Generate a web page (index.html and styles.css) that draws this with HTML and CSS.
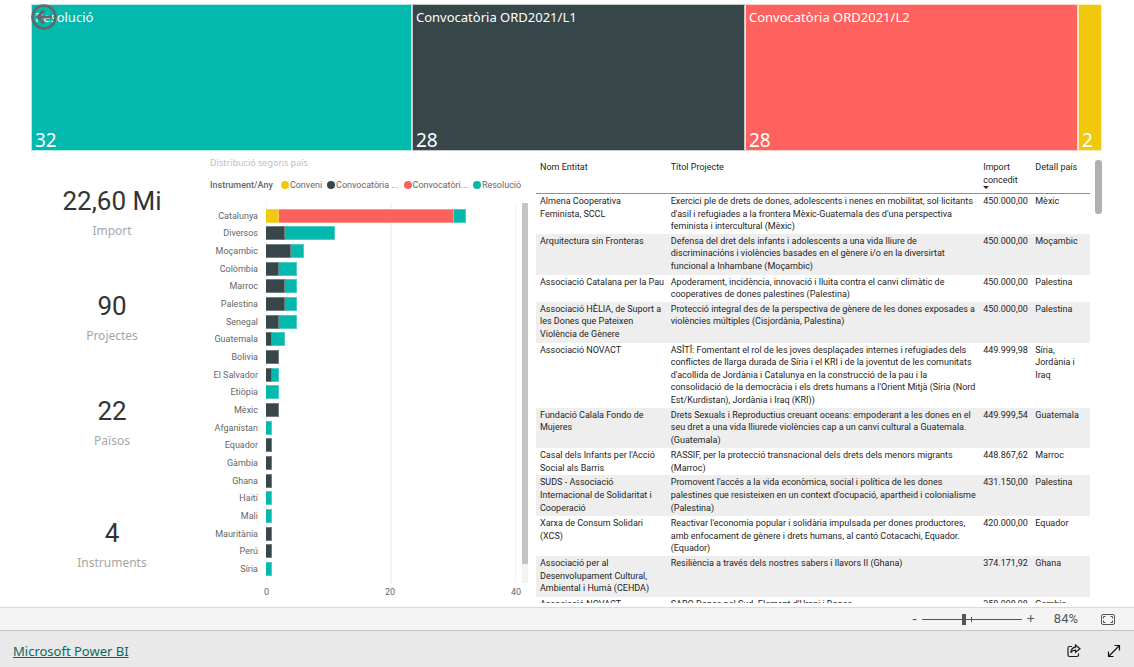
FILE: index.html
```html
<!DOCTYPE html>
<html lang="ca">
<head>
<meta charset="utf-8">
<meta name="viewport" content="width=device-width, initial-scale=1">
<title>Microsoft Power BI</title>
<link rel="stylesheet" href="styles.css">
</head>
<body>
<main class="report">
  <section class="treemap">
    <div class="tile resolucio"><span class="tile-name">Resolució</span><span class="tile-value">32</span></div>
    <div class="tile l1"><span class="tile-name">Convocatòria ORD2021/L1</span><span class="tile-value">28</span></div>
    <div class="tile l2"><span class="tile-name">Convocatòria ORD2021/L2</span><span class="tile-value">28</span></div>
    <div class="tile conveni"><span class="tile-value">2</span></div>
    <button class="back" type="button" aria-label="Enrere">
      <svg viewBox="0 0 26 26" width="26" height="26" fill="none" stroke="#666" stroke-width="2.600"><circle cx="13" cy="13" r="11.500"/><path d="M21 13H6.500M13 6.500 6.500 13l6.500 6.500" stroke-width="3"/></svg>
    </button>
  </section>

  <div class="panels">
    <section class="cards">
      <div class="card"><span class="card-value">22,60 Mi</span><span class="card-label">Import</span></div>
      <div class="card"><span class="card-value">90</span><span class="card-label">Projectes</span></div>
      <div class="card"><span class="card-value">22</span><span class="card-label">Països</span></div>
      <div class="card last"><span class="card-value">4</span><span class="card-label">Instruments</span></div>
    </section>

    <section class="chart">
      <h2 class="chart-title">Distribució segons país</h2>
      <div class="legend">
        <span class="legend-title">Instrument/Any</span>
        <span class="legend-item"><i class="dot conveni"></i>Conveni</span>
        <span class="legend-item"><i class="dot l1"></i>Convocatòria ...</span>
        <span class="legend-item"><i class="dot l2"></i>Convocatòri...</span>
        <span class="legend-item"><i class="dot resolucio"></i>Resolució</span>
      </div>
      <div class="plot">
        <div class="names">
          <span>Catalunya</span><span>Diversos</span><span>Moçambic</span><span>Colòmbia</span><span>Marroc</span><span>Palestina</span><span>Senegal</span><span>Guatemala</span><span>Bolivia</span><span>El Salvador</span><span>Etiòpia</span><span>Mèxic</span><span>Afganistan</span><span>Equador</span><span>Gàmbia</span><span>Ghana</span><span>Haití</span><span>Mali</span><span>Mauritània</span><span>Perú</span><span>Síria</span>
        </div>
        <div class="bars">
          <div class="bar"><i class="conveni" style="width:5%"></i><i class="l2" style="width:70%"></i><i class="resolucio" style="width:5%"></i></div>
          <div class="bar"><i class="l1" style="width:7.5%"></i><i class="resolucio" style="width:20%"></i></div>
          <div class="bar"><i class="l1" style="width:10%"></i><i class="resolucio" style="width:5%"></i></div>
          <div class="bar"><i class="l1" style="width:5%"></i><i class="resolucio" style="width:7.5%"></i></div>
          <div class="bar"><i class="l1" style="width:7.5%"></i><i class="resolucio" style="width:5%"></i></div>
          <div class="bar"><i class="l1" style="width:7.5%"></i><i class="resolucio" style="width:5%"></i></div>
          <div class="bar"><i class="l1" style="width:5%"></i><i class="resolucio" style="width:7.5%"></i></div>
          <div class="bar"><i class="l1" style="width:2.5%"></i><i class="resolucio" style="width:5%"></i></div>
          <div class="bar"><i class="l1" style="width:5%"></i></div>
          <div class="bar"><i class="l1" style="width:2.5%"></i><i class="resolucio" style="width:2.5%"></i></div>
          <div class="bar"><i class="resolucio" style="width:5%"></i></div>
          <div class="bar"><i class="l1" style="width:5%"></i></div>
          <div class="bar"><i class="resolucio" style="width:2.5%"></i></div>
          <div class="bar"><i class="l1" style="width:2.5%"></i></div>
          <div class="bar"><i class="l1" style="width:2.5%"></i></div>
          <div class="bar"><i class="l1" style="width:2.5%"></i></div>
          <div class="bar"><i class="resolucio" style="width:2.5%"></i></div>
          <div class="bar"><i class="resolucio" style="width:2.5%"></i></div>
          <div class="bar"><i class="l1" style="width:2.5%"></i></div>
          <div class="bar"><i class="l1" style="width:2.5%"></i></div>
          <div class="bar"><i class="resolucio" style="width:2.5%"></i></div>
        </div>
        <div class="chart-scroll"><div class="chart-thumb"></div></div>
        <div class="axis"><span>0</span><span>20</span><span>40</span></div>
      </div>
    </section>

    <section class="list">
      <div class="table-clip">
      <table class="projects">
        <colgroup><col class="c-entity"><col class="c-title"><col class="c-amount"><col class="c-country"></colgroup>
        <thead>
          <tr><th scope="col">Nom Entitat</th><th scope="col">Títol Projecte</th><th scope="col" aria-sort="descending">Import<br>concedit<span class="sort"></span></th><th scope="col">Detall país</th></tr>
        </thead>
        <tbody>
          <tr><td>Almena Cooperativa<br>Feminista, SCCL</td><td>Exercici ple de drets de dones, adolescents i nenes en mobilitat, sol·licitants<br>d'asil i refugiades a la frontera Mèxic-Guatemala des d'una perspectiva<br>feminista i intercultural (Mèxic)</td><td>450.000,00</td><td>Mèxic</td></tr>
          <tr><td>Arquitectura sin Fronteras</td><td>Defensa del dret dels infants i adolescents a una vida lliure de<br>discriminacións i violències basades en el gènere i/o en la diversirtat<br>funcional a Inhambane (Moçambic)</td><td>450.000,00</td><td>Moçambic</td></tr>
          <tr><td>Associació Catalana per la Pau</td><td>Apoderament, incidència, innovació i lluita contra el canvi climàtic de<br>cooperatives de dones palestines (Palestina)</td><td>450.000,00</td><td>Palestina</td></tr>
          <tr><td>Associació HÈLIA, de Suport a<br>les Dones que Pateixen<br>Violència de Gènere</td><td>Protecció integral des de la perspectiva de gènere de les dones exposades a<br>violències múltiples (Cisjordània, Palestina)</td><td>450.000,00</td><td>Palestina</td></tr>
          <tr><td>Associació NOVACT</td><td>ASÎTÎ: Fomentant el rol de les joves desplaçades internes i refugiades dels<br>conflictes de llarga durada de Síria i el KRI i de la joventut de les comunitats<br>d'acollida de Jordània i Catalunya en la construcció de la pau i la<br>consolidació de la democràcia i els drets humans a l'Orient Mitjà (Síria (Nord<br>Est/Kurdistan), Jordània i Iraq (KRI))</td><td>449.999,98</td><td>Síria,<br>Jordània i<br>Iraq</td></tr>
          <tr><td>Fundació Calala Fondo de<br>Mujeres</td><td>Drets Sexuals i Reproductius creuant oceans: empoderant a les dones en el<br>seu dret a una vida lliurede violències cap a un canvi cultural a Guatemala.<br>(Guatemala)</td><td>449.999,54</td><td>Guatemala</td></tr>
          <tr><td>Casal dels Infants per l'Acció<br>Social als Barris</td><td>RASSIF, per la protecció transnacional dels drets dels menors migrants<br>(Marroc)</td><td>448.867,62</td><td>Marroc</td></tr>
          <tr><td>SUDS - Associació<br>Internacional de Solidaritat i<br>Cooperació</td><td>Promovent l'accés a la vida econòmica, social i política de les dones<br>palestines que resisteixen en un context d'ocupació, apartheid i colonialisme<br>(Palestina)</td><td>431.150,00</td><td>Palestina</td></tr>
          <tr><td>Xarxa de Consum Solidari<br>(XCS)</td><td>Reactivar l'economia popular i solidària impulsada per dones productores,<br>amb enfocament de gènere i drets humans, al cantó Cotacachi, Equador.<br>(Equador)</td><td>420.000,00</td><td>Equador</td></tr>
          <tr><td>Associació per al<br>Desenvolupament Cultural,<br>Ambiental i Humà (CEHDA)</td><td>Resiliència a través dels nostres sabers i llavors II (Ghana)</td><td>374.171,92</td><td>Ghana</td></tr>
          <tr><td>Associació NOVACT</td><td>SABO Dones pel Sud. Element d'Urani i Dones</td><td>358.998,98</td><td>Gambia</td></tr>
        </tbody>
      </table>
      </div>
      <div class="list-thumb"></div>
    </section>
  </div>
</main>

<div class="zoombar">
  <button class="step" type="button" aria-label="Redueix">-</button>
  <input class="zoom-range" type="range" min="0" max="100" value="42" aria-label="Zoom">
  <button class="step plus" type="button" aria-label="Amplia">+</button>
  <span class="zoom-value">84%</span>
  <button class="icon-button" type="button" aria-label="Ajusta a la pàgina">
    <svg viewBox="0 0 14 11" width="14" height="11" fill="none" stroke="#555"><rect x=".5" y=".5" width="13" height="10" rx="1.500"/><path d="M2.500 4.500v-2h2M9.500 2.500h2v2M11.500 6.500v2h-2M4.500 8.500h-2v-2"/></svg>
  </button>
</div>

<footer class="footer">
  <a class="brand" href="#">Microsoft Power BI</a>
  <button class="icon-button" type="button" aria-label="Comparteix">
    <svg viewBox="0 0 14 14" width="14" height="14" fill="none" stroke="#1b1b1b" stroke-width="1.200"><path d="M5 2.500H2.500Q1 2.500 1 4v7q0 1.500 1.500 1.500h7.500q1.500 0 1.500-1.500V9.500"/><path d="M8.500 1 13 4.700 8.500 8.300V6.200Q5.500 6 3.800 8.800 4.200 3.600 8.500 3.200Z"/></svg>
  </button>
  <button class="icon-button" type="button" aria-label="Pantalla completa">
    <svg viewBox="0 0 14 14" width="14" height="14" fill="none" stroke="#111" stroke-width="1.200"><path d="M1.500 12.500l11-11M7.500 1.500h5v5M1.500 7.500v5h5"/></svg>
  </button>
</footer>
</body>
</html>
```

FILE: styles.css
```css
* { box-sizing: border-box; }

body {
  margin: 0;
  height: 100vh;
  display: flex;
  flex-direction: column;
  background: #fff;
  color: #252423;
  font-family: "Noto Sans", "Open Sans", sans-serif;
  font-size: 9px;
}

button {
  padding: 0;
  border: 0;
  background: none;
  color: inherit;
  font: inherit;
}

svg { display: block; }

.resolucio { background: #03b8ac; }
.l1 { background: #374649; }
.l2 { background: #fe625e; }
.conveni { background: #f2c80f; }

.report {
  flex: 1;
  min-height: 0;
  display: flex;
  flex-direction: column;
  padding: 4px 32px 4px 31px;
}

/* Treemap */
.treemap {
  position: relative;
  display: grid;
  grid-template-columns: 381fr 333fr 333fr 24fr;
  flex: 0 0 147px;
}
.tile {
  min-width: 0;
  display: flex;
  flex-direction: column;
  padding: 4px 4px 0 3px;
  border: 1px solid rgba(255, 255, 255, .7);
  color: #fff;
  white-space: nowrap;
}
.tile-name { font-size: 13px; line-height: 17px; }
.tile-value { margin-top: auto; font-size: 19px; line-height: 20px; }
.back { position: absolute; left: 0; top: 0; }

.panels {
  flex: 1;
  min-height: 0;
  display: grid;
  grid-template-columns: 179fr 326fr 566fr;
}
.panels > * { min-width: 0; min-height: 0; }

/* Cards */
.cards {
  display: flex;
  flex-direction: column;
  gap: 49px;
  padding: 34px 17px 0 0;
}
.card {
  display: flex;
  flex-direction: column;
  align-items: center;
  gap: 4px;
}
.card.last { margin-top: 17px; }
.card-value { font: 26px/32px Roboto, sans-serif; color: #333; }
.card-label { font-size: 12px; line-height: 20px; color: #a6a6a6; }

/* Bar chart */
.chart {
  display: flex;
  flex-direction: column;
  padding-right: 8px;
  color: #666;
  font-family: Roboto, sans-serif;
}
.chart-title {
  margin: 5px 0 0;
  font: 9px/14px "Noto Sans", sans-serif;
  color: #c0c0c0;
}
.legend {
  display: flex;
  align-items: center;
  gap: 5px;
  margin: 8px 0 11px;
  line-height: 14px;
  white-space: nowrap;
}
.legend-title { margin-right: 3px; font-weight: 500; }
.legend-item { display: flex; align-items: center; gap: 1px; }
.dot { width: 8px; height: 8px; border-radius: 50%; }
.plot {
  flex: 1;
  min-height: 0;
  display: grid;
  grid-template: 1fr 20px / 50fr 250fr 6px;
  column-gap: 6px;
}
.names, .bars {
  display: grid;
  grid-auto-rows: 1fr;
  padding: 4px 0 5px;
}
.names { padding-right: 2px; white-space: nowrap; }
.names span { display: flex; align-items: center; justify-content: flex-end; }
.bars {
  background:
    linear-gradient(#f3f3f3, #f3f3f3) left / 1px 100% no-repeat,
    linear-gradient(#f3f3f3, #f3f3f3) center / 2px 100% no-repeat,
    linear-gradient(#f3f3f3, #f3f3f3) right / 1px 100% no-repeat;
}
.bar { display: flex; align-items: center; }
.bar i { height: 14px; border: 1px solid rgba(255, 255, 255, .3); border-left-width: 0; }
.chart-scroll { background: #f3f3f3; }
.chart-thumb { height: 95%; background: #c4c4c4; }
.axis {
  grid-column: 2;
  display: flex;
  justify-content: space-between;
  margin: 2px -5px 0 -2px;
  line-height: 14px;
}

/* Project table */
.list {
  display: flex;
  align-items: flex-start;
  gap: 5px;
  padding-top: 9px;
}
.table-clip { flex: 1; min-width: 0; height: 100%; overflow: hidden; }
.list-thumb { flex: none; width: 7px; height: 54px; border-radius: 3px; background: #b0b0b0; }
.projects {
  width: 100%;
  table-layout: fixed;
  border-spacing: 0;
  font-family: Roboto, sans-serif;
  line-height: 1.4;
  white-space: nowrap;
}
.c-entity { width: 23.6%; }
.c-title { width: 56.4%; }
.c-amount { width: 9.4%; }
.projects th, .projects td {
  padding: 1px 4px;
  text-align: left;
  vertical-align: top;
  font-weight: 400;
}
.projects th { height: 34px; border-bottom: 1px solid #2bbdb1; }
.projects tbody tr:nth-child(even) td { padding-bottom: 2px; background: #eee; }
.sort {
  display: block;
  width: 0;
  border: 3px solid transparent;
  border-top-color: #252423;
  border-bottom: 0;
}

/* Zoom bar */
.zoombar {
  flex: 0 0 23px;
  display: flex;
  align-items: center;
  justify-content: flex-end;
  padding-right: 19px;
  border-top: 1px solid #dadada;
  background: #f4f4f4;
  color: #555;
}
.step { font-size: 14px; line-height: 20px; }
.zoom-range {
  width: 100px;
  height: 11px;
  margin: 0 5px;
  appearance: none;
  background:
    linear-gradient(#555, #555) 50% 50% / 1px 5px no-repeat,
    linear-gradient(#555, #555) center / 100% 1px no-repeat;
}
.zoom-range::-webkit-slider-thumb {
  appearance: none;
  width: 4px;
  height: 11px;
  background: #555;
}
.zoom-value { margin: 0 23px 0 19px; font: 13px/20px Roboto, sans-serif; }

/* Footer */
.footer {
  flex: 0 0 37px;
  display: flex;
  align-items: center;
  gap: 26px;
  padding: 4px 13px 0;
  border-top: 1px solid #c4c4c4;
  background: #e9e9e9;
}
.brand { margin-right: auto; color: #0b6a60; font-size: 13px; line-height: 20px; }
```
